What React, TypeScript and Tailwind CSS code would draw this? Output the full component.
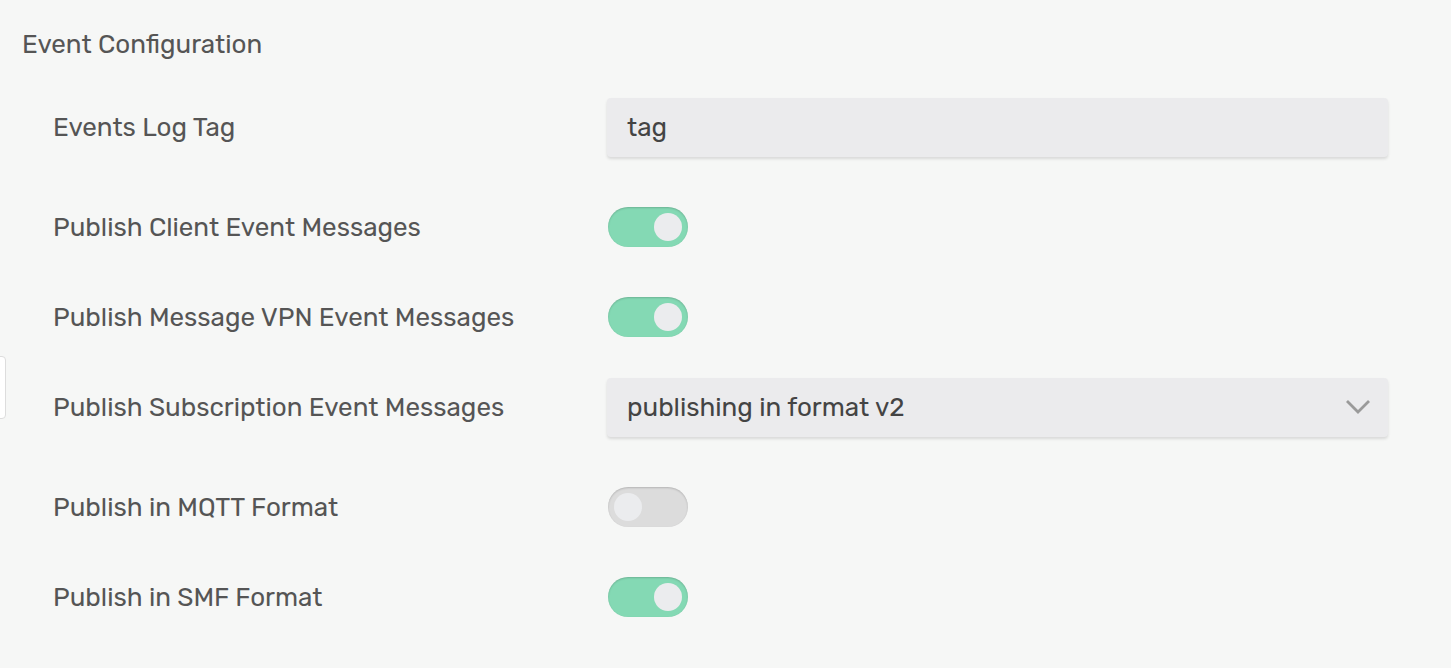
import React, { useState } from 'react';

const font = { fontFamily: 'Rubik, Inter, "Noto Sans", sans-serif' };

const Toggle: React.FC<{ on: boolean; onClick: () => void }> = ({ on, onClick }) => (
  <button
    onClick={onClick}
    className={`relative w-[80px] h-[40px] ml-[1px] rounded-full flex items-center px-[6px] shadow-[inset_0_1px_2px_rgba(0,0,0,0.18)] ${on ? 'bg-[#84d9b4] justify-end' : 'bg-[#dcdcdc] justify-start'}`}
  >
    <span className="w-[28px] h-[28px] rounded-full bg-[#ebecee]" />
  </button>
);

const Row: React.FC<{ label: string; children: React.ReactNode; tall?: boolean }> = ({ label, children, tall }) => (
  <div className={`flex items-center ${tall ? 'h-[100px]' : 'h-[80px]'}`}>
    <div className="w-[554px] text-[26px] text-[#555555]">{label}</div>
    <div className="flex-1">{children}</div>
  </div>
);

const App: React.FC = () => {
  const [t, setT] = useState({ client: true, vpn: true, mqtt: false, smf: true });

  return (
    <div className="relative min-h-screen w-full bg-[#f6f7f6] overflow-hidden" style={font}>
      <div className="absolute left-[-8px] top-[356px] w-[14px] h-[63px] bg-white border border-[#dddddd] rounded-[4px]" />

      <div className="pl-[22px] pr-[63px] pt-[26px]">
        <h2 className="text-[26px] text-[#555555] leading-[38px]">Event Configuration</h2>

        <div className="pl-[31px] pt-[13px]">
          <Row label="Events Log Tag" tall>
            <div className="h-[59px] rounded-[4px] bg-[#ebebed] shadow-[0_2px_3px_rgba(0,0,0,0.12)] flex items-center px-[20px] text-[26px] text-[#444444]">
              tag
            </div>
          </Row>
          <Row label="Publish Client Event Messages" tall>
            <Toggle on={t.client} onClick={() => setT({ ...t, client: !t.client })} />
          </Row>
          <Row label="Publish Message VPN Event Messages">
            <Toggle on={t.vpn} onClick={() => setT({ ...t, vpn: !t.vpn })} />
          </Row>
          <Row label="Publish Subscription Event Messages" tall>
            <div className="h-[59px] rounded-[4px] bg-[#ebebed] shadow-[0_2px_3px_rgba(0,0,0,0.12)] flex items-center justify-between pl-[20px] pr-[17px] text-[26px] text-[#444444]">
              <span>publishing in format v2</span>
              <svg width="26" height="16" viewBox="0 0 26 16" fill="none">
                <path d="M2 2 L13 13 L24 2" stroke="#9a9a9a" strokeWidth="2.8" />
              </svg>
            </div>
          </Row>
          <Row label="Publish in MQTT Format" tall>
            <Toggle on={t.mqtt} onClick={() => setT({ ...t, mqtt: !t.mqtt })} />
          </Row>
          <Row label="Publish in SMF Format">
            <Toggle on={t.smf} onClick={() => setT({ ...t, smf: !t.smf })} />
          </Row>
        </div>
      </div>
    </div>
  );
};

export default App;
